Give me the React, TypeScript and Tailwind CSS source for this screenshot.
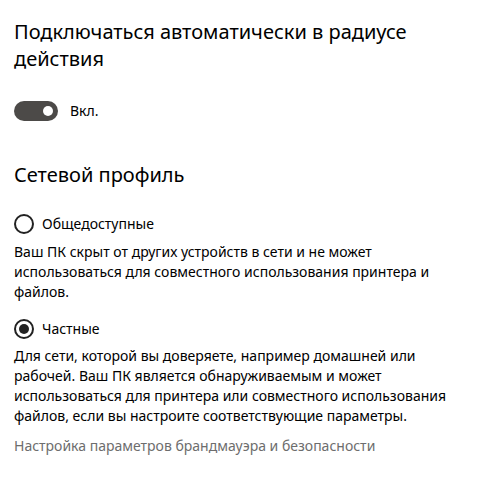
import React, { useState } from 'react';

function Toggle({ on, onChange }: { on: boolean; onChange: () => void }) {
  return (
    <button
      onClick={onChange}
      className={`relative w-[44px] h-[20px] rounded-full ${on ? 'bg-[#4c4a48]' : 'bg-white border-2 border-[#333]'}`}
    >
      <span
        className={`absolute top-[5px] w-[10px] h-[10px] rounded-full ${on ? 'right-[5px] bg-white' : 'left-[5px] bg-[#333]'}`}
      />
    </button>
  );
}

function Radio({ checked }: { checked: boolean }) {
  return (
    <span className="w-[20px] h-[20px] rounded-full border-2 border-[#222] flex items-center justify-center shrink-0">
      {checked && <span className="w-[10px] h-[10px] rounded-full bg-[#222]" />}
    </span>
  );
}

export default function App() {
  const [auto, setAuto] = useState(true);
  const [profile, setProfile] = useState<'public' | 'private'>('private');

  return (
    <div className="w-[491px] h-[485px] bg-white px-[14px] pt-[18px] text-black font-['Segoe_UI','Noto_Sans',sans-serif]">
      {/* Auto connect */}
      <h2 className="text-[20px] leading-[27px] w-[420px]">
        Подключаться автоматически в радиусе действия
      </h2>
      <div className="flex items-center gap-[12px] mt-[29px]">
        <Toggle on={auto} onChange={() => setAuto(!auto)} />
        <span className="text-[14px] leading-[20px]">{auto ? 'Вкл.' : 'Откл.'}</span>
      </div>

      {/* Network profile */}
      <h2 className="text-[20px] leading-[28px] mt-[40px]">Сетевой профиль</h2>

      <label className="flex items-center gap-[8px] mt-[25px] cursor-pointer" onClick={() => setProfile('public')}>
        <Radio checked={profile === 'public'} />
        <span className="text-[14px] leading-[20px]">Общедоступные</span>
      </label>
      <p className="text-[14px] leading-[20px] mt-[8px] w-[440px]">
        Ваш ПК скрыт от других устройств в сети и не может использоваться для совместного использования принтера и файлов.
      </p>

      <label className="flex items-center gap-[8px] mt-[17px] cursor-pointer" onClick={() => setProfile('private')}>
        <Radio checked={profile === 'private'} />
        <span className="text-[14px] leading-[20px]">Частные</span>
      </label>
      <p className="text-[14px] leading-[20px] mt-[7px] w-[450px]">
        Для сети, которой вы доверяете, например домашней или рабочей. Ваш ПК является обнаруживаемым и может использоваться для принтера или совместного использования файлов, если вы настроите соответствующие параметры.
      </p>

      <a className="block text-[14px] leading-[20px] mt-[10px] text-[#6d6d6d]">
        Настройка параметров брандмауэра и безопасности
      </a>
    </div>
  );
}
